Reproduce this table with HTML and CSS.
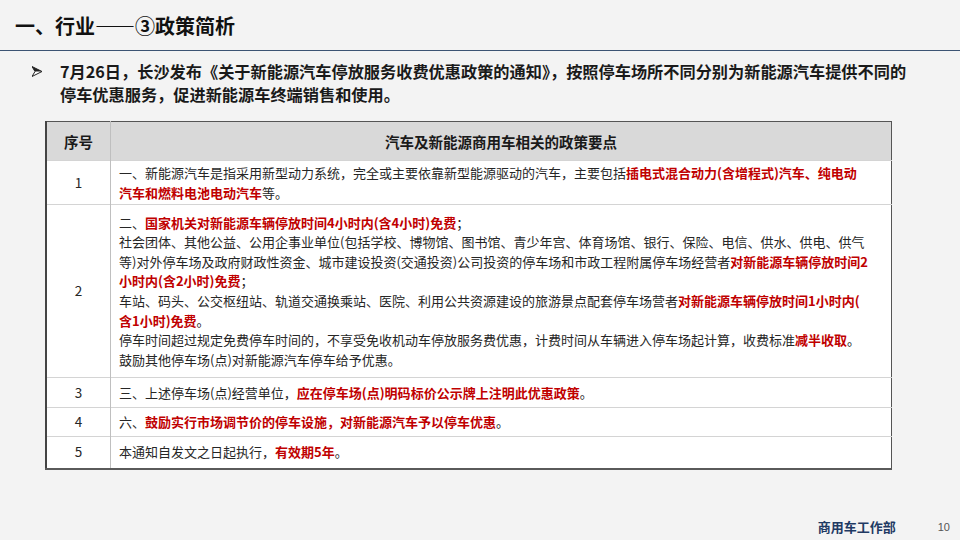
FILE: index.html
```html
<!DOCTYPE html>
<html lang="zh">
<head>
<meta charset="utf-8">
<link rel="stylesheet" href="styles.css">
</head>
<body>
<div class="slide">
  <h1 class="title">一、行业——③政策简析</h1>
  <div class="lead">
    <span class="bullet"><svg width="10" height="11" viewBox="0 0 10 11"><polygon points="0,0.5 10,5.5 0,10.5 3,5.5" fill="#fff" stroke="#222" stroke-width="1" stroke-linejoin="miter"/><polygon points="0,0.5 10,5.5 3,5.5" fill="#222"/></svg></span>
    <p class="lead-text">7月26日，长沙发布《关于新能源汽车停放服务收费优惠政策的通知》，按照停车场所不同分别为新能源汽车提供不同的<br>停车优惠服务，促进新能源车终端销售和使用。</p>
  </div>
  <table class="policy">
    <thead>
      <tr class="head-row">
        <th class="col-no">序号</th>
        <th>汽车及新能源商用车相关的政策要点</th>
      </tr>
    </thead>
    <tbody>
      <tr class="r1">
        <td class="col-no">1</td>
        <td>一、新能源汽车是指采用新型动力系统，完全或主要依靠新型能源驱动的汽车，主要包括<b>插电式混合动力(含增程式)汽车、纯电动</b><br><b>汽车和燃料电池电动汽车</b>等。</td>
      </tr>
      <tr class="r2">
        <td class="col-no">2</td>
        <td>二、<b>国家机关对新能源车辆停放时间4小时内(含4小时)免费</b>；<br>社会团体、其他公益、公用企事业单位(包括学校、博物馆、图书馆、青少年宫、体育场馆、银行、保险、电信、供水、供电、供气<br>等)对外停车场及政府财政性资金、城市建设投资(交通投资)公司投资的停车场和市政工程附属停车场经营者<b>对新能源车辆停放时间2</b><br><b>小时内(含2小时)免费</b>；<br>车站、码头、公交枢纽站、轨道交通换乘站、医院、利用公共资源建设的旅游景点配套停车场营者<b>对新能源车辆停放时间1小时内(</b><br><b>含1小时)免费</b>。<br>停车时间超过规定免费停车时间的，不享受免收机动车停放服务费优惠，计费时间从车辆进入停车场起计算，收费标准<b>减半收取</b>。<br>鼓励其他停车场(点)对新能源汽车停车给予优惠。</td>
      </tr>
      <tr class="r3">
        <td class="col-no">3</td>
        <td>三、上述停车场(点)经营单位，<b>应在停车场(点)明码标价公示牌上注明此优惠政策</b>。</td>
      </tr>
      <tr class="r4">
        <td class="col-no">4</td>
        <td>六、<b>鼓励实行市场调节价的停车设施，对新能源汽车予以停车优惠</b>。</td>
      </tr>
      <tr class="r5">
        <td class="col-no">5</td>
        <td>本通知自发文之日起执行，<b>有效期5年</b>。</td>
      </tr>
    </tbody>
  </table>
  <footer class="footer">
    <span class="dept">商用车工作部</span>
    <span class="page-no">10</span>
  </footer>
</div>
</body>
</html>
```

FILE: styles.css
```css
html, body {
  margin: 0;
  padding: 0;
}
body {
  background: #f3f3f3;
  font-family: "Noto Sans CJK SC", "Noto Sans", sans-serif;
  color: #262626;
}
.slide {
  width: 960px;
  height: 540px;
  display: flex;
  flex-direction: column;
  box-sizing: border-box;
  overflow: hidden;
}
.title {
  margin: 0;
  height: 51px;
  box-sizing: border-box;
  padding: 12px 0 0 15px;
  font-size: 20px;
  line-height: 27px;
  font-weight: 700;
  color: #111;
  border-bottom: 1.5px solid #3b5373;
}
.lead {
  display: flex;
  margin-top: 9px;
  padding-left: 32px;
}
.bullet {
  width: 28px;
  height: 23px;
  display: flex;
  align-items: center;
}
.bullet svg {
  display: block;
}
.lead-text {
  margin: 0;
  font-size: 16.2px;
  line-height: 23px;
  font-weight: 700;
  color: #1a1a1a;
  white-space: nowrap;
}
.policy {
  margin: 15px 0 0 45px;
  width: 847px;
  border-collapse: collapse;
  border-top: 1px solid #555;
  border-right: 1.5px solid #555;
  border-left: 2px solid #444;
  border-bottom: 2.5px solid #5a5a5a;
  background: #fff;
}
.policy th {
  background: #d9d9d9;
  font-size: 14.5px;
  font-weight: 700;
  height: 38px;
  padding: 0;
  color: #1a1a1a;
  text-align: center;
  border-left: 1px solid #bfbfbf;
}
.policy td {
  font-size: 13px;
  line-height: 19.6px;
  padding: 0 0 0 8px;
  white-space: nowrap;
  vertical-align: middle;
  border-top: 1.5px solid #d4d4d4;
  border-left: 1px solid #bfbfbf;
  color: #262626;
}
.policy td.col-no {
  width: 63px;
  padding: 0;
  text-align: center;
  font-size: 13.5px;
}
.policy th.col-no {
  width: 63px;
}
.policy b {
  color: #c00000;
  font-weight: 700;
}
.r1 { height: 44px; }
.r2 { height: 173px; }
.r3 { height: 30px; }
.r4 { height: 29px; }
.r5 { height: 32px; }
.footer {
  margin-top: auto;
  height: 23px;
  display: flex;
  justify-content: flex-end;
  align-items: flex-start;
  padding-right: 10px;
}
.dept {
  font-size: 13px;
  font-weight: 700;
  color: #1f3a63;
  line-height: 20px;
}
.page-no {
  margin-left: 42px;
  font-size: 11px;
  line-height: 20px;
  color: #555;
  font-family: "Liberation Sans", sans-serif;
}
```
